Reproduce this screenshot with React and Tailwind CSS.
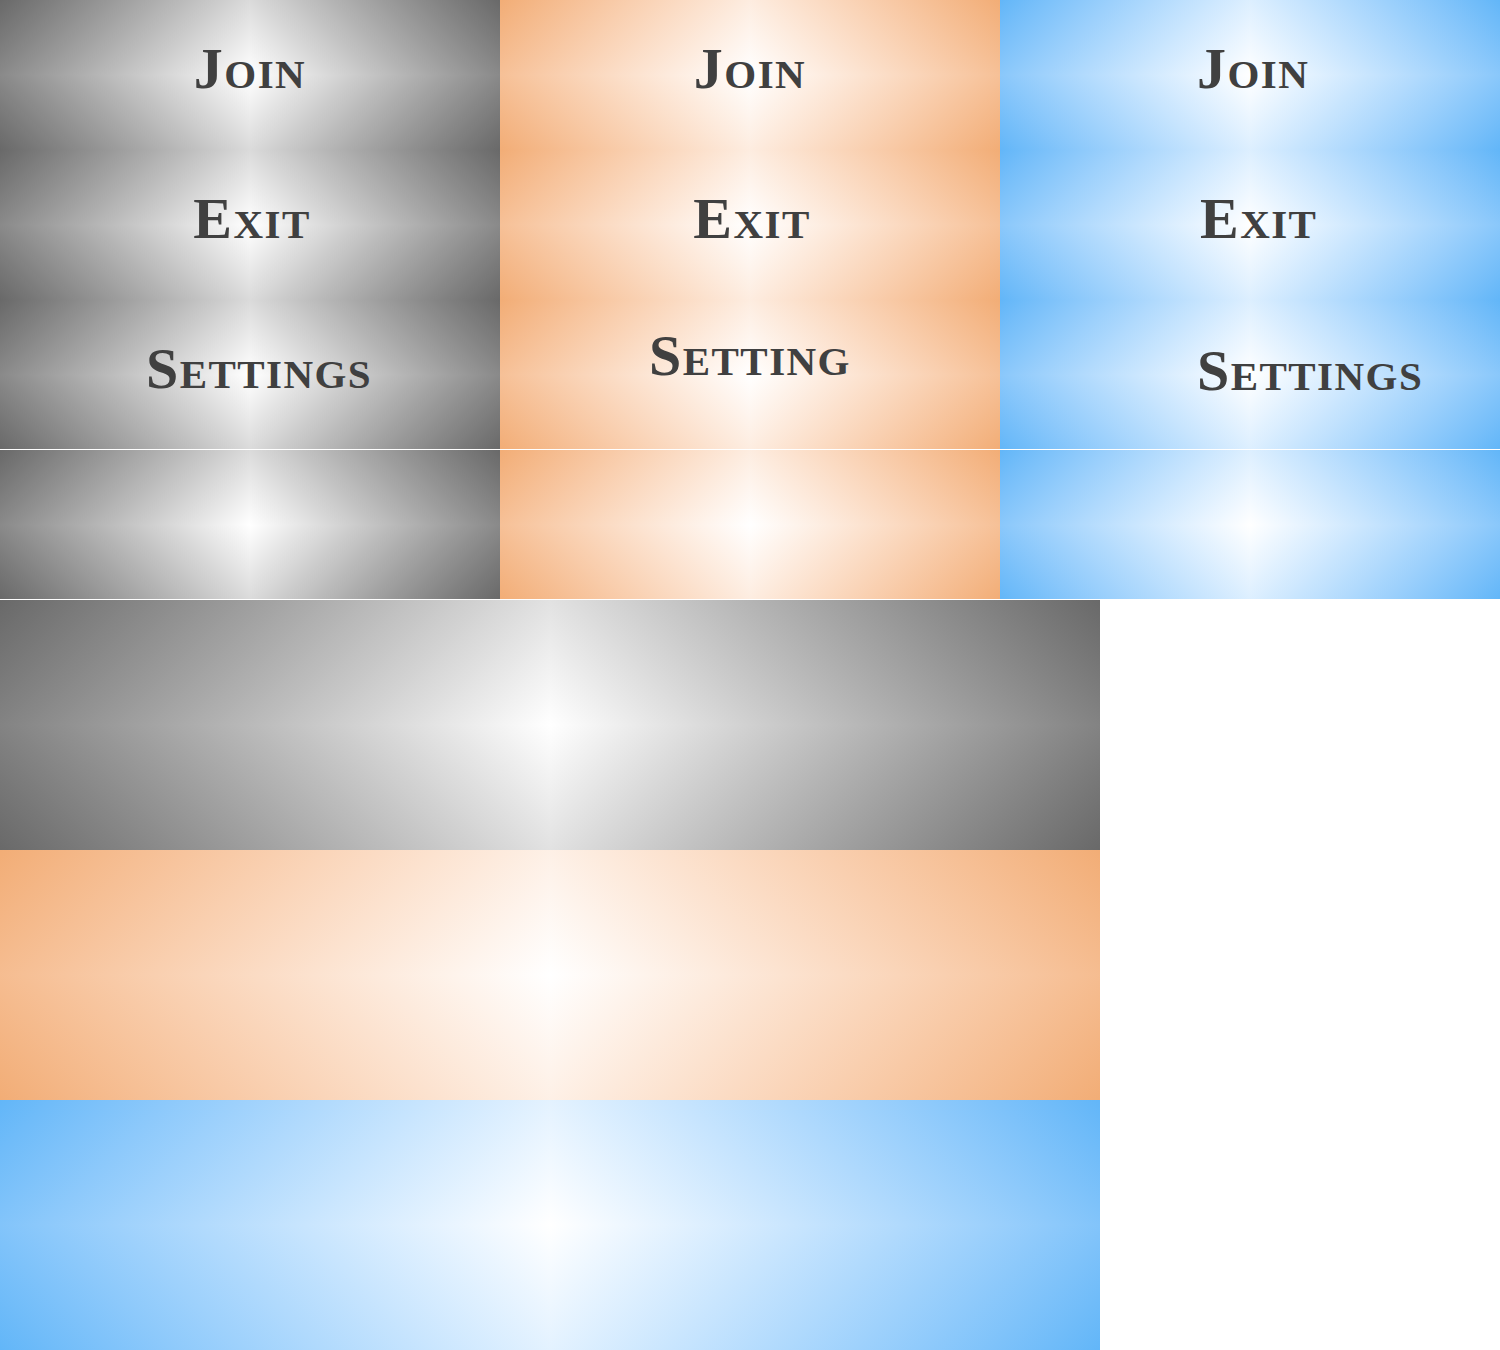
import React from "react";

// four-quadrant diamond gradients, one per colour
const gray =
  "[background:linear-gradient(135deg_in_oklab,#696969,#fff)_top_left/50%_50%_no-repeat_border-box,linear-gradient(225deg_in_oklab,#696969,#fff)_top_right/50%_50%_no-repeat_border-box,linear-gradient(45deg_in_oklab,#696969,#fff)_bottom_left/50%_50%_no-repeat_border-box,linear-gradient(315deg_in_oklab,#696969,#fff)_bottom_right/50%_50%_no-repeat_border-box]";
const orange =
  "[background:linear-gradient(135deg_in_oklab,#f2ad76,#fff)_top_left/50%_50%_no-repeat_border-box,linear-gradient(225deg_in_oklab,#f2ad76,#fff)_top_right/50%_50%_no-repeat_border-box,linear-gradient(45deg_in_oklab,#f2ad76,#fff)_bottom_left/50%_50%_no-repeat_border-box,linear-gradient(315deg_in_oklab,#f2ad76,#fff)_bottom_right/50%_50%_no-repeat_border-box]";
const blue =
  "[background:linear-gradient(135deg_in_oklab,#62b6f8,#fff)_top_left/50%_50%_no-repeat_border-box,linear-gradient(225deg_in_oklab,#62b6f8,#fff)_top_right/50%_50%_no-repeat_border-box,linear-gradient(45deg_in_oklab,#62b6f8,#fff)_bottom_left/50%_50%_no-repeat_border-box,linear-gradient(315deg_in_oklab,#62b6f8,#fff)_bottom_right/50%_50%_no-repeat_border-box]";

const label =
  "font-['Liberation_Serif',serif] font-bold text-[58px] leading-none [font-variant:small-caps] tracking-[0.025em] text-[#404040] whitespace-nowrap";

const columns = [
  {
    bg: gray,
    items: [
      { text: "Join", cls: "justify-center pt-[40px]" },
      { text: "Exit", cls: "justify-center pt-[40px] pl-[4px]" },
      { text: "Settings", cls: "justify-center pt-[40px] pl-[18px] border-b border-white" },
    ],
  },
  {
    bg: orange,
    items: [
      { text: "Join", cls: "justify-center pt-[40px]" },
      { text: "Exit", cls: "justify-center pt-[40px] pl-[4px]" },
      { text: "Setting", cls: "justify-center pt-[27px] border-b border-white" },
    ],
  },
  {
    bg: blue,
    items: [
      { text: "Join", cls: "justify-start pt-[40px] pl-[197px]" },
      { text: "Exit", cls: "justify-start pt-[40px] pl-[200px]" },
      { text: "Settings", cls: "justify-start pt-[42px] pl-[197px] border-b border-white" },
    ],
  },
];

function Column({ col }) {
  return (
    <div className="w-[500px] flex flex-col">
      {col.items.map((it, i) => (
        <div key={i} className={`flex h-[150px] items-start ${col.bg} ${it.cls}`}>
          <span className={label}>{it.text}</span>
        </div>
      ))}
      <div className={`h-[150px] border-b border-white ${col.bg}`} />
    </div>
  );
}

export default function App() {
  return (
    <div className="w-[1500px] h-[1350px] bg-white">
      <div className="flex">
        {columns.map((col, i) => (
          <Column key={i} col={col} />
        ))}
      </div>
      <div className="w-[1100px] flex flex-col">
        <div className={`h-[250px] ${gray}`} />
        <div className={`h-[250px] ${orange}`} />
        <div className={`h-[250px] ${blue}`} />
      </div>
    </div>
  );
}
